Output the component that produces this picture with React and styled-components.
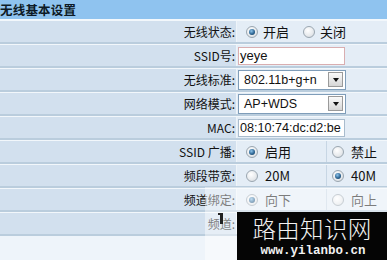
import React from 'react'
import styled, { createGlobalStyle } from 'styled-components'

const GlobalStyle = createGlobalStyle`
  html, body {
    margin: 0;
    padding: 0;
    background: #eef4fa;
    overflow: hidden;
  }
  * { box-sizing: border-box; }
`

const Page = styled.div`
  position: relative;
  width: 387px;
  height: 260px;
  overflow: hidden;
  background: #eef4fa;
  font-family: "Noto Sans CJK SC", "Liberation Sans", sans-serif;
  font-size: 12px;
  color: #111;
`

const Header = styled.div`
  height: 20px;
  line-height: 19px;
  background: #8fc3ef;
  font-weight: bold;
  font-size: 12.5px;
  color: #0d1a26;
  border-bottom: 1px solid #f3f8fc;
  letter-spacing: 0.2px;
`

const Row = styled.div`
  display: grid;
  grid-template-columns: 237px 1fr;
  height: 24px;
  border-bottom: 2px solid #bacddd;
  border-top: 1px solid #f2f7fb;
`

const Label = styled.div`
  background: #d2e0ee;
  text-align: right;
  padding-right: 1px;
  line-height: 21px;
  white-space: nowrap;
  border-right: 1px solid #eef4f9;
`

const Value = styled.div`
  background: #e4edf6;
  display: flex;
  align-items: center;
  padding-left: ${p => p.$pad ?? 9}px;
  gap: 5px;
`

const Split = styled.div`
  display: grid;
  grid-template-columns: 89px 1fr;
  background: #e4edf6;
`

const Cell = styled.div`
  display: flex;
  align-items: center;
  gap: 7px;
  padding-left: ${p => p.$pad}px;
  border-left: ${p => (p.$line ? '1px solid #c7d6e4' : 'none')};
`

const Radio = styled.span`
  width: 12px;
  height: 12px;
  border-radius: 50%;
  border: 1px solid #9aa6b0;
  background: radial-gradient(circle at 40% 35%, #ffffff 0%, #e6e9ec 60%, #c9cfd5 100%);
  display: inline-flex;
  align-items: center;
  justify-content: center;
  flex: none;
  &::after {
    content: '';
    display: ${p => (p.$on ? 'block' : 'none')};
    width: 6px;
    height: 6px;
    border-radius: 50%;
    background: radial-gradient(circle at 40% 35%, #8fc4ea 0%, #2d6694 55%, #12344f 100%);
  }
`

const Option = styled.span`
  font-size: 13px;
  margin-right: ${p => p.$gap ?? 0}px;
`

const TextBox = styled.div`
  width: 107px;
  height: 18px;
  background: #fff;
  border: 1px solid ${p => p.$border};
  font-family: "Liberation Sans", sans-serif;
  font-size: ${p => p.$size ?? 13}px;
  line-height: 16px;
  padding-left: 1px;
  white-space: nowrap;
  overflow: hidden;
`

const Select = styled.div`
  width: 108px;
  height: 20px;
  background: #fff;
  border: 1px solid #7f9db9;
  display: flex;
  align-items: center;
  justify-content: space-between;
  padding: 0 2px 0 5px;
  font-family: "Liberation Sans", sans-serif;
  font-size: 12.5px;
`

const Arrow = styled.span`
  width: 15px;
  height: 15px;
  border: 1px solid #9a9a9a;
  background: linear-gradient(#fafafa, #d6d6d6);
  display: flex;
  align-items: center;
  justify-content: center;
  &::after {
    content: '';
    border-left: 3.5px solid transparent;
    border-right: 3.5px solid transparent;
    border-top: 4px solid #111;
  }
`

const Veil = styled.div`
  position: absolute;
  left: 205px;
  top: 187px;
  right: 0;
  bottom: 0;
  background: rgba(255, 255, 255, 0.45);
`

const Watermark = styled.div`
  position: absolute;
  left: 237px;
  top: 212px;
  width: 150px;
  height: 48px;
  background: #050505;
  color: #f2f2f2;
  display: flex;
  flex-direction: column;
  align-items: center;
  padding-top: 3px;
  gap: 3px;
`

const Brand = styled.div`
  font-size: 23.5px;
  font-weight: 300;
  line-height: 27px;
  height: 27px;
  letter-spacing: 0.3px;
`

const Site = styled.div`
  font-family: "Liberation Mono", monospace;
  font-size: 12.5px;
  font-weight: bold;
  line-height: 12px;
  height: 12px;
  margin-left: 2px;
`

const Mark = styled.span`
  position: absolute;
  left: 218px;
  top: 213px;
  width: 5px;
  height: 11px;
  border-top: 2px solid #222;
  border-right: 3px solid #222;
`

function RadioPair({ a, b, on, split }) {
  if (split) {
    return (
      <Split>
        <Cell $pad={9}><Radio $on={on === 0} /><Option>{a}</Option></Cell>
        <Cell $pad={5} $line><Radio $on={on === 1} /><Option>{b}</Option></Cell>
      </Split>
    )
  }
  return (
    <Value>
      <Radio $on={on === 0} /><Option $gap={9}>{a}</Option>
      <Radio $on={on === 1} /><Option>{b}</Option>
    </Value>
  )
}

export default function App() {
  return (
    <Page>
      <GlobalStyle />
      <Header>无线基本设置</Header>
      <Row>
        <Label>无线状态:</Label>
        <RadioPair a="开启" b="关闭" on={0} />
      </Row>
      <Row>
        <Label>SSID号:</Label>
        <Value $pad={1}><TextBox $border="#d9aeb0">yeye</TextBox></Value>
      </Row>
      <Row>
        <Label>无线标准:</Label>
        <Value $pad={1}><Select>802.11b+g+n<Arrow /></Select></Value>
      </Row>
      <Row>
        <Label>网络模式:</Label>
        <Value $pad={1}><Select>AP+WDS<Arrow /></Select></Value>
      </Row>
      <Row>
        <Label>MAC:</Label>
        <Value $pad={1}><TextBox $border="#a9bccd" $size={12.6}>08:10:74:dc:d2:be</TextBox></Value>
      </Row>
      <Row>
        <Label>SSID 广播:</Label>
        <RadioPair a="启用" b="禁止" on={0} split />
      </Row>
      <Row>
        <Label>频段带宽:</Label>
        <RadioPair a="20M" b="40M" on={1} split />
      </Row>
      <Row>
        <Label>频道绑定:</Label>
        <RadioPair a="向下" b="向上" on={0} split />
      </Row>
      <Row>
        <Label>频道:</Label>
        <Value />
      </Row>
      <Veil />
      <Mark />
      <Watermark>
        <Brand>路由知识网</Brand>
        <Site>www.yilanbo.cn</Site>
      </Watermark>
    </Page>
  )
}
